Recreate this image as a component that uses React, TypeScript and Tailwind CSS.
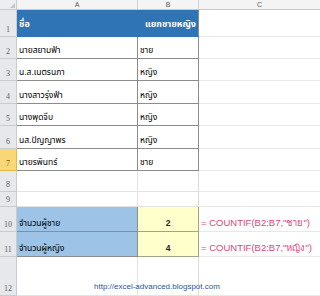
import React from 'react';

type Row = {
  n: number;
  h: string;
  a?: React.ReactNode;
  b?: React.ReactNode;
  c?: React.ReactNode;
  kind: 'head' | 'data' | 'blank' | 'sum' | 'link';
};

const rows: Row[] = [
  { n: 1, h: 'h-[27px]', a: 'ชื่อ', b: 'แยกชายหญิง', kind: 'head' },
  { n: 2, h: 'h-[22px]', a: 'นายสยามฟ้า', b: 'ชาย', kind: 'data' },
  { n: 3, h: 'h-[22px]', a: 'น.ส.เนตรนภา', b: 'หญิง', kind: 'data' },
  { n: 4, h: 'h-[23px]', a: 'นางสาวรุ่งฟ้า', b: 'หญิง', kind: 'data' },
  { n: 5, h: 'h-[22px]', a: 'นางพุดจีบ', b: 'หญิง', kind: 'data' },
  { n: 6, h: 'h-[23px]', a: 'นส.ปัญญาพร', b: 'หญิง', kind: 'data' },
  { n: 7, h: 'h-[22px]', a: 'นายรพินทร์', b: 'ชาย', kind: 'data' },
  { n: 8, h: 'h-[21px]', kind: 'blank' },
  { n: 9, h: 'h-[15px]', kind: 'blank' },
  { n: 10, h: 'h-[25px]', a: 'จำนวนผู้ชาย', b: '2', c: '= COUNTIF(B2:B7,"ชาย")', kind: 'sum' },
  { n: 11, h: 'h-[25px]', a: 'จำนวนผู้หญิง', b: '4', c: '= COUNTIF(B2:B7,"หญิง")', kind: 'sum' },
  { n: 12, h: 'h-[39px]', kind: 'link' },
];

const thai = "font-['Tahoma','Liberation_Sans','Noto_Sans_Thai',sans-serif]";

export default function App() {
  return (
    <div className={`w-[320px] h-[296px] overflow-hidden bg-white text-[8.5px] text-black ${thai}`}>
      {/* column headers */}
      <div className="flex h-[10px] bg-[#f4f4f4] border-b border-[#c8cbd0] text-[7px] text-[#555] leading-none">
        <div className="w-[17px] border-r border-[#c8cbd0] bg-[#eceef1] relative">
          <span className="absolute right-[1px] bottom-[1px] w-0 h-0 border-l-[5px] border-l-transparent border-b-[5px] border-b-[#c3c6cb]" />
        </div>
        <div className="w-[121px] border-r border-[#d0d3d7] flex items-center justify-center">A</div>
        <div className="w-[61px] border-r border-[#d0d3d7] flex items-center justify-center">B</div>
        <div className="flex-1 flex items-center justify-center">C</div>
      </div>

      {rows.map((r) => {
        const sel = r.n === 7;
        const dark = r.kind === 'data';
        const sum = r.kind === 'sum';
        return (
          <div key={r.n} className={`flex ${r.h}`}>
            <div
              className={`w-[17px] shrink-0 flex items-end justify-center pb-[2px] font-['Liberation_Serif',serif] text-[8px] leading-none border-r border-b ${
                sel ? 'bg-[#f9d777] text-[#7a5b12] border-[#e2b84a]' : 'bg-[#e6e8ec] text-[#5b5e63] border-[#c8cbd0]'
              }`}
            >
              {r.n}
            </div>

            {/* column A */}
            <div
              className={`w-[121px] shrink-0 flex items-end px-[2px] pb-[4px] leading-none whitespace-nowrap border-b border-r ${
                r.kind === 'head'
                  ? 'bg-[#2f75b5] text-white font-bold border-[#2f75b5] text-[9px] pb-[7px]'
                  : dark
                  ? 'border-[#8c8c8c]'
                  : sum
                  ? 'bg-[#9dc3e6] border-[#8c8c8c]'
                  : 'border-[#e3e3e3]'
              }`}
            >
              {r.a}
            </div>

            {/* column B */}
            <div
              className={`w-[61px] shrink-0 flex items-end px-[2px] pb-[4px] leading-none whitespace-nowrap border-b border-r ${
                r.kind === 'head'
                  ? 'bg-[#2f75b5] text-white font-bold text-[9px] border-[#2f75b5] border-r-[#8c8c8c] justify-end pb-[7px]'
                  : dark
                  ? 'border-[#8c8c8c]'
                  : sum
                  ? 'bg-[#ffffcc] border-[#a3a38a] justify-center font-bold text-[#222]'
                  : 'border-[#e3e3e3] border-r-[#dcdcdc]'
              }`}
            >
              {r.b}
            </div>

            {/* column C */}
            <div className="flex-1 flex items-end px-[2px] pb-[4px] leading-none border-b border-[#e8e8e8] text-[#e0457b] font-['Liberation_Sans','Tahoma',sans-serif] text-[9.5px] whitespace-nowrap">
              {r.c}
            </div>
          </div>
        );
      })}

      <div className="relative">
        <span className="absolute left-[94px] top-[-13px] text-[8px] text-[#2f5597] font-['Liberation_Sans',sans-serif] leading-none">
          http://excel-advanced.blogspot.com
        </span>
      </div>
    </div>
  );
}
